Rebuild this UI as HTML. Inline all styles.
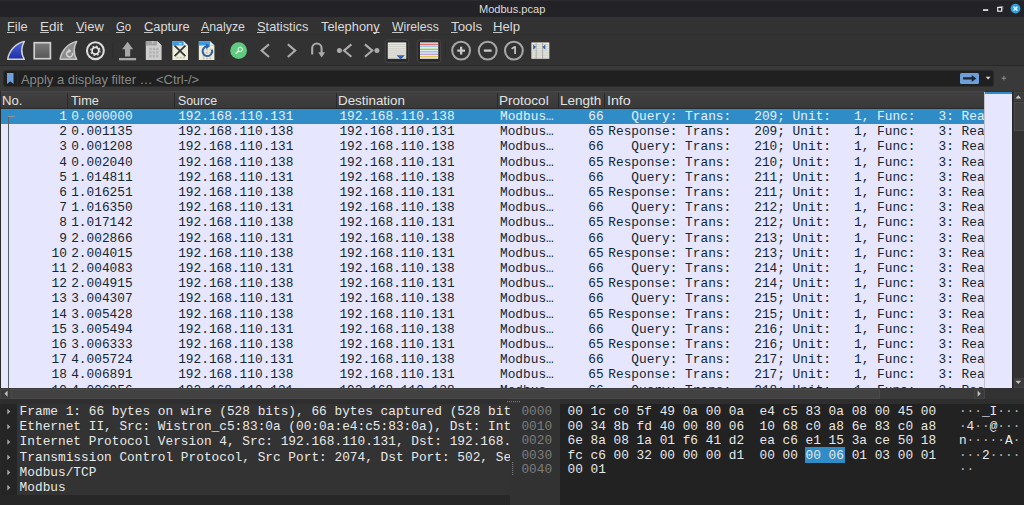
<!DOCTYPE html><html><head><meta charset="utf-8"><title>Modbus.pcap</title><style>
*{margin:0;padding:0;box-sizing:border-box}
html,body{width:1024px;height:505px;overflow:hidden;background:#323232}
body{position:relative;font-family:"Liberation Sans",sans-serif;color:#e4e4e4}
.abs{position:absolute}
.mono{font-family:"Liberation Mono",monospace;font-size:12.8px;white-space:pre}
#title{left:0;top:0;width:1024px;height:17px;background:#232327;border-top:1px solid #2b2b2f}
#titletxt{top:2.6px;transform-origin:0 0;white-space:pre;font-size:11.8px;line-height:13px;color:#dcdcdc}
.menu{top:19.5px;font-size:12.4px;line-height:14px;color:#dadada;white-space:pre;transform-origin:0 0}
.menu u{text-decoration:underline;text-decoration-skip-ink:none;text-decoration-thickness:0.9px;text-underline-offset:1.2px;text-decoration-color:#c4c4c4}
#mline{left:0;top:34.2px;width:1024px;height:1px;background:#2f2f2f}
#hline{left:1px;top:108.1px;width:984px;height:0.8px;background:#2a2a2a}
#tbline{left:0;top:65.3px;width:1024px;height:1.1px;background:#282828}
#fband{left:0;top:66.4px;width:1024px;height:25.1px;background:#393939}
#filter{left:2.8px;top:69.9px;width:990.9px;height:17.2px;background:#202020;border:1px solid #2b2b2b;border-radius:3px}
#filtertxt{top:72.8px;font-size:12.2px;line-height:14px;color:#888888;white-space:pre;transform-origin:0 0}
#hdr{left:1px;top:91.3px;width:984px;height:17.4px;background:linear-gradient(#414141,#383838);border-top:1px solid #484848}
.hsep{top:92.5px;width:1px;height:16px;background:#2a2a2a}
.ht{top:94.3px;font-size:12.2px;line-height:14px;color:#e2e2e2;white-space:pre;transform-origin:0 0}
#list{left:1px;top:108.7px;width:983px;height:279.3px;background:#e7e6ff;overflow:hidden}
.row{left:0;width:983px;height:15.2px;color:#12272e}
.row.sel{background:#308cc6;color:#e6f1f8}
.row span{position:absolute;top:0.4px;line-height:15.2px;height:15.2px}
#leftedge{left:0;top:91px;width:1px;height:297px;background:#2b2b2b}
#mini{left:984px;top:91.5px;width:28.2px;height:296.5px;background:#e7e6ff;border-left:1px solid #c2c2cc}
#minitop{left:985px;top:91.5px;width:27.2px;height:2.5px;background:#308cc6}
#vsb{left:1012.2px;top:91.5px;width:11.8px;height:296.5px;background:#323232;border-left:1px solid #262626}
.sbb{background:#3a3a3a;border:1px solid #434343}
#vsbh{left:1013.5px;top:101.5px;width:10.5px;height:29.5px;background:#3f3f3f;border:1px solid #4c4c4c;border-right:none}
#hsb{left:0;top:388px;width:985px;height:11px;background:#3a3a3a}
#hsbh{left:11px;top:388.5px;width:869px;height:10px;background:#424242;border:1px solid #4a4a4a}
#split{left:0;top:399px;width:1024px;height:5px;background:#2e2e2e}
#treebg{left:0;top:404px;width:509.7px;height:101px;background:#272727}
#treeind{left:1.3px;top:404px;width:15.7px;height:91.2px;background:#252525}
#treerows{left:17px;top:404px;width:492.7px;height:91.2px;background:#333333;overflow:hidden}
.trow{left:2.6px;color:#e8e8e8;line-height:15.2px;height:15.2px}
#offcol{left:509.7px;top:399px;width:50.6px;height:106px;background:#323232}
#hexbg{left:560.3px;top:404px;width:464px;height:101px;background:#222222}
.hrow{line-height:14.4px;height:14.4px;color:#e8e8e8}
.off{color:#7d7d7d}
.hrow i{font-style:normal;color:#b4b4b4}
</style></head><body>
<div id="title" class="abs"></div><div id="titletxt" class="abs" style="left:479.31px;transform:scaleX(0.9361)">Modbus.pcap</div>
<div class="abs menu" style="left:7.46px;transform:scaleX(1.0361)"><u>F</u>ile</div>
<div class="abs menu" style="left:39.61px;transform:scaleX(1.0875)"><u>E</u>dit</div>
<div class="abs menu" style="left:75.85px;transform:scaleX(1.0395)"><u>V</u>iew</div>
<div class="abs menu" style="left:116.35px;transform:scaleX(0.9129)"><u>G</u>o</div>
<div class="abs menu" style="left:143.58px;transform:scaleX(1.0357)"><u>C</u>apture</div>
<div class="abs menu" style="left:201.30px;transform:scaleX(0.9961)"><u>A</u>nalyze</div>
<div class="abs menu" style="left:256.73px;transform:scaleX(1.0357)"><u>S</u>tatistics</div>
<div class="abs menu" style="left:321.04px;transform:scaleX(1.0376)">Telephon<u>y</u></div>
<div class="abs menu" style="left:392.25px;transform:scaleX(0.9854)"><u>W</u>ireless</div>
<div class="abs menu" style="left:451.03px;transform:scaleX(1.0743)"><u>T</u>ools</div>
<div class="abs menu" style="left:493.24px;transform:scaleX(1.0581)"><u>H</u>elp</div>
<div id="mline" class="abs"></div><div id="tbline" class="abs"></div><div id="fband" class="abs"></div>
<div id="filter" class="abs"></div><div id="filtertxt" class="abs" style="left:21.30px;transform:scaleX(1.0604)">Apply a display filter … &lt;Ctrl-/&gt;</div>
<div id="hdr" class="abs"></div>
<div class="abs hsep" style="left:67.2px"></div>
<div class="abs hsep" style="left:174.1px"></div>
<div class="abs hsep" style="left:335.8px"></div>
<div class="abs hsep" style="left:496.7px"></div>
<div class="abs hsep" style="left:558.2px"></div>
<div class="abs hsep" style="left:603.9px"></div>
<div class="abs ht" style="left:2.12px;transform:scaleX(1.0772)">No.</div>
<div class="abs ht" style="left:70.84px;transform:scaleX(1.0474)">Time</div>
<div class="abs ht" style="left:177.64px;transform:scaleX(1.0114)">Source</div>
<div class="abs ht" style="left:338.30px;transform:scaleX(1.0970)">Destination</div>
<div class="abs ht" style="left:499.29px;transform:scaleX(1.1107)">Protocol</div>
<div class="abs ht" style="left:560.19px;transform:scaleX(1.1089)">Length</div>
<div class="abs ht" style="left:606.52px;transform:scaleX(1.1671)">Info</div>
<div id="list" class="abs">
<div class="row abs mono sel" style="top:0.0px"><span style="right:917.2px">1</span><span style="left:70.2px">0.000000</span><span style="left:177.2px">192.168.110.131</span><span style="left:338.4px">192.168.110.138</span><span style="left:499px">Modbus…</span><span style="right:380.4px">66</span><span style="left:607.3px">   Query: Trans:   209; Unit:   1, Func:   3: Read Holding Registers</span></div>
<div class="row abs mono" style="top:15.2px"><span style="right:917.2px">2</span><span style="left:70.2px">0.001135</span><span style="left:177.2px">192.168.110.138</span><span style="left:338.4px">192.168.110.131</span><span style="left:499px">Modbus…</span><span style="right:380.4px">65</span><span style="left:607.3px">Response: Trans:   209; Unit:   1, Func:   3: Read Holding Registers</span></div>
<div class="row abs mono" style="top:30.4px"><span style="right:917.2px">3</span><span style="left:70.2px">0.001208</span><span style="left:177.2px">192.168.110.131</span><span style="left:338.4px">192.168.110.138</span><span style="left:499px">Modbus…</span><span style="right:380.4px">66</span><span style="left:607.3px">   Query: Trans:   210; Unit:   1, Func:   3: Read Holding Registers</span></div>
<div class="row abs mono" style="top:45.6px"><span style="right:917.2px">4</span><span style="left:70.2px">0.002040</span><span style="left:177.2px">192.168.110.138</span><span style="left:338.4px">192.168.110.131</span><span style="left:499px">Modbus…</span><span style="right:380.4px">65</span><span style="left:607.3px">Response: Trans:   210; Unit:   1, Func:   3: Read Holding Registers</span></div>
<div class="row abs mono" style="top:60.8px"><span style="right:917.2px">5</span><span style="left:70.2px">1.014811</span><span style="left:177.2px">192.168.110.131</span><span style="left:338.4px">192.168.110.138</span><span style="left:499px">Modbus…</span><span style="right:380.4px">66</span><span style="left:607.3px">   Query: Trans:   211; Unit:   1, Func:   3: Read Holding Registers</span></div>
<div class="row abs mono" style="top:76.0px"><span style="right:917.2px">6</span><span style="left:70.2px">1.016251</span><span style="left:177.2px">192.168.110.138</span><span style="left:338.4px">192.168.110.131</span><span style="left:499px">Modbus…</span><span style="right:380.4px">65</span><span style="left:607.3px">Response: Trans:   211; Unit:   1, Func:   3: Read Holding Registers</span></div>
<div class="row abs mono" style="top:91.2px"><span style="right:917.2px">7</span><span style="left:70.2px">1.016350</span><span style="left:177.2px">192.168.110.131</span><span style="left:338.4px">192.168.110.138</span><span style="left:499px">Modbus…</span><span style="right:380.4px">66</span><span style="left:607.3px">   Query: Trans:   212; Unit:   1, Func:   3: Read Holding Registers</span></div>
<div class="row abs mono" style="top:106.4px"><span style="right:917.2px">8</span><span style="left:70.2px">1.017142</span><span style="left:177.2px">192.168.110.138</span><span style="left:338.4px">192.168.110.131</span><span style="left:499px">Modbus…</span><span style="right:380.4px">65</span><span style="left:607.3px">Response: Trans:   212; Unit:   1, Func:   3: Read Holding Registers</span></div>
<div class="row abs mono" style="top:121.6px"><span style="right:917.2px">9</span><span style="left:70.2px">2.002866</span><span style="left:177.2px">192.168.110.131</span><span style="left:338.4px">192.168.110.138</span><span style="left:499px">Modbus…</span><span style="right:380.4px">66</span><span style="left:607.3px">   Query: Trans:   213; Unit:   1, Func:   3: Read Holding Registers</span></div>
<div class="row abs mono" style="top:136.8px"><span style="right:917.2px">10</span><span style="left:70.2px">2.004015</span><span style="left:177.2px">192.168.110.138</span><span style="left:338.4px">192.168.110.131</span><span style="left:499px">Modbus…</span><span style="right:380.4px">65</span><span style="left:607.3px">Response: Trans:   213; Unit:   1, Func:   3: Read Holding Registers</span></div>
<div class="row abs mono" style="top:152.0px"><span style="right:917.2px">11</span><span style="left:70.2px">2.004083</span><span style="left:177.2px">192.168.110.131</span><span style="left:338.4px">192.168.110.138</span><span style="left:499px">Modbus…</span><span style="right:380.4px">66</span><span style="left:607.3px">   Query: Trans:   214; Unit:   1, Func:   3: Read Holding Registers</span></div>
<div class="row abs mono" style="top:167.2px"><span style="right:917.2px">12</span><span style="left:70.2px">2.004915</span><span style="left:177.2px">192.168.110.138</span><span style="left:338.4px">192.168.110.131</span><span style="left:499px">Modbus…</span><span style="right:380.4px">65</span><span style="left:607.3px">Response: Trans:   214; Unit:   1, Func:   3: Read Holding Registers</span></div>
<div class="row abs mono" style="top:182.4px"><span style="right:917.2px">13</span><span style="left:70.2px">3.004307</span><span style="left:177.2px">192.168.110.131</span><span style="left:338.4px">192.168.110.138</span><span style="left:499px">Modbus…</span><span style="right:380.4px">66</span><span style="left:607.3px">   Query: Trans:   215; Unit:   1, Func:   3: Read Holding Registers</span></div>
<div class="row abs mono" style="top:197.6px"><span style="right:917.2px">14</span><span style="left:70.2px">3.005428</span><span style="left:177.2px">192.168.110.138</span><span style="left:338.4px">192.168.110.131</span><span style="left:499px">Modbus…</span><span style="right:380.4px">65</span><span style="left:607.3px">Response: Trans:   215; Unit:   1, Func:   3: Read Holding Registers</span></div>
<div class="row abs mono" style="top:212.8px"><span style="right:917.2px">15</span><span style="left:70.2px">3.005494</span><span style="left:177.2px">192.168.110.131</span><span style="left:338.4px">192.168.110.138</span><span style="left:499px">Modbus…</span><span style="right:380.4px">66</span><span style="left:607.3px">   Query: Trans:   216; Unit:   1, Func:   3: Read Holding Registers</span></div>
<div class="row abs mono" style="top:228.0px"><span style="right:917.2px">16</span><span style="left:70.2px">3.006333</span><span style="left:177.2px">192.168.110.138</span><span style="left:338.4px">192.168.110.131</span><span style="left:499px">Modbus…</span><span style="right:380.4px">65</span><span style="left:607.3px">Response: Trans:   216; Unit:   1, Func:   3: Read Holding Registers</span></div>
<div class="row abs mono" style="top:243.2px"><span style="right:917.2px">17</span><span style="left:70.2px">4.005724</span><span style="left:177.2px">192.168.110.131</span><span style="left:338.4px">192.168.110.138</span><span style="left:499px">Modbus…</span><span style="right:380.4px">66</span><span style="left:607.3px">   Query: Trans:   217; Unit:   1, Func:   3: Read Holding Registers</span></div>
<div class="row abs mono" style="top:258.4px"><span style="right:917.2px">18</span><span style="left:70.2px">4.006891</span><span style="left:177.2px">192.168.110.138</span><span style="left:338.4px">192.168.110.131</span><span style="left:499px">Modbus…</span><span style="right:380.4px">65</span><span style="left:607.3px">Response: Trans:   217; Unit:   1, Func:   3: Read Holding Registers</span></div>
<div class="row abs mono" style="top:273.6px"><span style="right:917.2px">19</span><span style="left:70.2px">4.006956</span><span style="left:177.2px">192.168.110.131</span><span style="left:338.4px">192.168.110.138</span><span style="left:499px">Modbus…</span><span style="right:380.4px">66</span><span style="left:607.3px">   Query: Trans:   218; Unit:   1, Func:   3: Read Holding Registers</span></div>
<div class="abs" style="left:7.1px;top:7.6px;width:1px;height:280px;background:#5e6068"></div>
<div class="abs" style="left:7.1px;top:7.6px;width:7px;height:1px;background:#8a98a4"></div>
</div>
<div id="leftedge" class="abs"></div><div id="hline" class="abs"></div>
<div id="mini" class="abs"></div><div id="minitop" class="abs"></div>
<div id="vsb" class="abs"></div><div id="vsbh" class="abs"></div>
<div class="abs sbb" style="left:1013.5px;top:91.5px;width:10.5px;height:9.5px;border-right:none"></div>
<div class="abs sbb" style="left:1013.5px;top:377.5px;width:10.5px;height:10.5px;border-right:none"></div>
<div id="hsb" class="abs"></div><div id="hsbh" class="abs"></div>
<div class="abs sbb" style="left:0px;top:388.5px;width:11px;height:10.5px"></div>
<div class="abs sbb" style="left:974px;top:388.5px;width:10.5px;height:10.5px"></div>
<div id="split" class="abs"></div>
<div id="treebg" class="abs"></div><div id="treeind" class="abs"></div><div id="treerows" class="abs">
<div class="abs mono trow" style="top:0.0px">Frame 1: 66 bytes on wire (528 bits), 66 bytes captured (528 bits)</div>
<div class="abs mono trow" style="top:15.2px">Ethernet II, Src: Wistron_c5:83:0a (00:0a:e4:c5:83:0a), Dst: Intel_1c:c0:5f (00:0a:00:1c:c0:5f)</div>
<div class="abs mono trow" style="top:30.4px">Internet Protocol Version 4, Src: 192.168.110.131, Dst: 192.168.110.138</div>
<div class="abs mono trow" style="top:45.6px">Transmission Control Protocol, Src Port: 2074, Dst Port: 502, Seq: 1, Ack: 1, Len: 12</div>
<div class="abs mono trow" style="top:60.8px">Modbus/TCP</div>
<div class="abs mono trow" style="top:76.0px">Modbus</div>
</div>
<div id="offcol" class="abs"></div><div id="hexbg" class="abs"></div>
<div class="abs" style="left:805.2px;top:447.3px;width:39.8px;height:15.6px;background:#308cc6"></div>
<div class="abs mono hrow off" style="left:521.4px;top:405.4px">0000</div>
<div class="abs mono hrow" style="left:567.5px;top:405.4px">00 1c c0 5f 49 0a 00 0a  e4 c5 83 0a 08 00 45 00</div>
<div class="abs mono hrow" style="left:958.9px;top:405.4px"><i>···</i>_I<i>···</i> <i>······</i>E<i>·</i></div>
<div class="abs mono hrow off" style="left:521.4px;top:419.8px">0010</div>
<div class="abs mono hrow" style="left:567.5px;top:419.8px">00 34 8b fd 40 00 80 06  10 68 c0 a8 6e 83 c0 a8</div>
<div class="abs mono hrow" style="left:958.9px;top:419.8px"><i>·</i>4<i>··</i>@<i>···</i> <i>·</i>h<i>··</i>n<i>···</i></div>
<div class="abs mono hrow off" style="left:521.4px;top:434.2px">0020</div>
<div class="abs mono hrow" style="left:567.5px;top:434.2px">6e 8a 08 1a 01 f6 41 d2  ea c6 e1 15 3a ce 50 18</div>
<div class="abs mono hrow" style="left:958.9px;top:434.2px">n<i>·····</i>A<i>·</i> <i>····</i>:<i>·</i>P<i>·</i></div>
<div class="abs mono hrow off" style="left:521.4px;top:448.6px">0030</div>
<div class="abs mono hrow" style="left:567.5px;top:448.6px">fc c6 00 32 00 00 00 d1  00 00 00 06 01 03 00 01</div>
<div class="abs mono hrow" style="left:958.9px;top:448.6px"><i>···</i>2<i>····</i> <i>········</i></div>
<div class="abs mono hrow off" style="left:521.4px;top:463.0px">0040</div>
<div class="abs mono hrow" style="left:567.5px;top:463.0px">00 01</div>
<div class="abs mono hrow" style="left:958.9px;top:463.0px"><i>··</i></div>
<svg class="abs" style="left:0;top:0" width="1024" height="505" viewBox="0 0 1024 505">
<defs>
<linearGradient id="gb" x1="0" y1="0" x2="0" y2="1"><stop offset="0" stop-color="#4a62d8"/><stop offset="1" stop-color="#1f2fa6"/></linearGradient>
<linearGradient id="gs" x1="0" y1="0" x2="0" y2="1"><stop offset="0" stop-color="#7c7c7c"/><stop offset="1" stop-color="#565656"/></linearGradient>
</defs>
<!-- window buttons -->
<rect x="983" y="9.2" width="5.2" height="1.7" fill="#e6e6e6"/>
<rect x="997.7" y="7.4" width="4" height="3.8" fill="none" stroke="#e6e6e6" stroke-width="1.2"/>
<path d="M999.4 6.4h3.4v3.2" fill="none" stroke="#9a9a9a" stroke-width="0.8"/>
<circle cx="1015.5" cy="8.6" r="4.9" fill="#2aa3e2"/>
<path d="M1013.6 6.7l3.8 3.8M1017.4 6.7l-3.8 3.8" stroke="#fff" stroke-width="1.3" fill="none"/>
<!-- shark fin start -->
<path d="M7.7 59.3C8.7 52 15 43.2 24.3 41.5C21.2 47 21.2 54 24.3 59.3Z" fill="url(#gb)" stroke="#d2d2d2" stroke-width="1.5" stroke-linejoin="round"/>
<!-- stop -->
<rect x="34.2" y="42.7" width="16.2" height="16" fill="url(#gs)" stroke="#cecece" stroke-width="1.7"/>
<!-- restart fin -->
<path d="M60.1 59.3C61.1 52 67.4 43.2 76.7 41.5C73.6 47 73.6 54 76.7 59.3Z" fill="#8c8c8c" stroke="#c6c6c6" stroke-width="1.5" stroke-linejoin="round"/>
<path d="M72.42 52.87A3 3 0 1 1 69.08 50.95" fill="none" stroke="#d0d0d0" stroke-width="1.6"/>
<path d="M68.3 48.5l3.1 2.4l-3.1 2.3z" fill="#d6d6d6"/>
<!-- options gear -->
<circle cx="95.4" cy="50.7" r="8.4" fill="none" stroke="#dcdcdc" stroke-width="2.1"/>
<circle cx="95.4" cy="50.7" r="3.35" fill="none" stroke="#e8e8e8" stroke-width="1.7"/>
<circle cx="95.4" cy="50.7" r="4.7" fill="none" stroke="#e8e8e8" stroke-width="1.1" stroke-dasharray="1.846 1.846"/>
<!-- separators -->
<rect x="112.3" y="43" width="0.8" height="15" fill="#2b2b2b"/>
<rect x="222.5" y="43" width="0.8" height="15" fill="#2b2b2b"/>
<rect x="445" y="43" width="0.8" height="15" fill="#2b2b2b"/>
<!-- open (upload arrow) -->
<path d="M127.6 41.8l5.5 7.5h-2.9v7.1h-5.2v-7.1h-2.9z" fill="#a8a8a8"/>
<rect x="119" y="58" width="17.1" height="2.3" fill="#a8a8a8"/>
<!-- save doc (gray) -->
<path d="M145.8 41.2h11.4l4.4 4.4v14.4h-15.8z" fill="#cfcfcf"/>
<path d="M145.8 41.2h11.4l4.4 4.4h-15.8z" fill="#a2a2a2"/>
<path d="M151.5 41.2l1.2 2.6l1.2-2.6z" fill="#cfcfcf"/>
<path d="M157.2 41.2v4.4h4.4z" fill="#dadada"/>
<g fill="#b0b0b0"><rect x="149.3" y="47.8" width="2.4" height="2.3"/><rect x="152.7" y="47.8" width="2.4" height="2.3"/><rect x="156.1" y="47.8" width="2.4" height="2.3"/><rect x="149.3" y="51.3" width="2.4" height="2.3"/><rect x="152.7" y="51.3" width="2.4" height="2.3"/><rect x="156.1" y="51.3" width="2.4" height="2.3"/><rect x="149.3" y="54.9" width="2.4" height="2.3"/><rect x="152.7" y="54.9" width="2.4" height="2.3"/><rect x="156.1" y="54.9" width="2.4" height="2.3"/></g><g stroke="#c2c2c2" stroke-width="0.6" fill="none"><path d="M148.2 50.7h11.4M148.2 54.2h11.4M148.2 57.8h11.4"/></g>
<!-- close doc -->
<path d="M172.4 41.2h11.2l4.4 4.4v14.4h-15.6z" fill="#eeeed8"/>
<path d="M172.4 41.2h11.2l4.4 4.4h-15.6z" fill="#3c9ade"/>
<path d="M183.6 41.2v4.4h4.4z" fill="#dff0fa"/>
<path d="M178.5 44.3a1.8 1.8 0 0 1 3.4 0z" fill="#e6f3fb"/>
<g fill="#c6c6b6"><rect x="176.2" y="56.8" width="2.2" height="1.6"/><rect x="179.5" y="56.8" width="2.2" height="1.6"/><rect x="182.8" y="56.8" width="2.2" height="1.6"/></g>
<path d="M174.6 45.6l10.8 10.6M185.4 45.6l-10.8 10.6" stroke="#2e3338" stroke-width="1.7" fill="none"/>
<!-- reload doc -->
<path d="M198.8 41.2h11.2l4.4 4.4v14.4h-15.6z" fill="#eeeed8"/>
<path d="M198.8 41.2h11.2l4.4 4.4h-15.6z" fill="#3c9ade"/>
<path d="M210 41.2v4.4h4.4z" fill="#dff0fa"/>
<g fill="#c6c6b6"><rect x="202.6" y="48.6" width="2.2" height="1.8"/><rect x="205.9" y="48.6" width="2.2" height="1.8"/><rect x="209.2" y="48.6" width="2.2" height="1.8"/><rect x="202.6" y="51.8" width="2.2" height="1.8"/><rect x="205.9" y="51.8" width="2.2" height="1.8"/><rect x="209.2" y="51.8" width="2.2" height="1.8"/><rect x="202.6" y="55.0" width="2.2" height="1.8"/><rect x="205.9" y="55.0" width="2.2" height="1.8"/><rect x="209.2" y="55.0" width="2.2" height="1.8"/><rect x="202.6" y="57.6" width="2.2" height="1.8"/><rect x="205.9" y="57.6" width="2.2" height="1.8"/><rect x="209.2" y="57.6" width="2.2" height="1.8"/></g>
<path d="M206.6 46.5A4.8 4.8 0 1 0 211.9 49.6" fill="none" stroke="#2f5fae" stroke-width="2"/>
<path d="M205.8 43.6l4.4 2.4l-4 3.2z" fill="#2f5fae"/>
<!-- find -->
<circle cx="238.6" cy="50.6" r="8.4" fill="#5fca80"/>
<circle cx="240.2" cy="49.4" r="2.2" fill="none" stroke="#f4fff6" stroke-width="1"/>
<path d="M238.6 51l-3 2.8" stroke="#f4fff6" stroke-width="1.2" fill="none"/>
<!-- nav arrows -->
<g fill="none" stroke="#ababab" stroke-width="2.1">
<path d="M269 44.2l-7.4 6.4l7.4 6.4"/>
<path d="M287.8 44.2l7.4 6.4l-7.4 6.4"/>
<path d="M312.2 54.4v-6.2a4.7 4.7 0 0 1 9.4 0v5"/>
<path d="M351.4 44.4l-7.4 6.2l7.4 6.2"/>
<path d="M364.9 44.4l7.4 6.2l-7.4 6.2"/>
</g>
<path d="M318.2 52.2h6.9l-3.45 5.4z" fill="#ababab"/>
<circle cx="339.4" cy="50.6" r="2.5" fill="#ababab"/>
<circle cx="376.9" cy="50.6" r="2.5" fill="#ababab"/>
<!-- autoscroll button -->
<rect x="385.3" y="39.9" width="23.4" height="22.6" rx="2.5" fill="#2a2a2a" stroke="#464646" stroke-width="1"/>
<rect x="387.8" y="42.4" width="18.4" height="16.4" fill="#e9e9e2"/>
<g stroke="#bdbdb6" stroke-width="0.7"><path d="M387.8 44.6h18.4M387.8 46.7h18.4M387.8 48.8h18.4M387.8 50.9h18.4M387.8 53h18.4M387.8 55.1h18.4M387.8 57.2h18.4"/></g>
<path d="M396.6 55.2h8.2l-4.1 4.3z" fill="#2d62b2"/>
<!-- colorize button -->
<rect x="417.3" y="39.9" width="23.4" height="22.6" rx="2.5" fill="#2a2a2a" stroke="#464646" stroke-width="1"/>
<rect x="420" y="42.4" width="18.2" height="16.4" fill="#f4f4f4"/>
<rect x="420" y="43.7" width="18.2" height="1.2" fill="#e85a5a"/>
<rect x="420" y="45.6" width="18.2" height="1.6" fill="#a4c2ea"/>
<rect x="420" y="48.6" width="18.2" height="1.4" fill="#84d648"/>
<rect x="420" y="50.8" width="18.2" height="1.8" fill="#a4c2ea"/>
<rect x="420" y="53.7" width="18.2" height="1.1" fill="#b08cc4"/>
<rect x="420" y="55.8" width="18.2" height="1.6" fill="#e2c452"/>
<!-- zoom -->
<g fill="none" stroke="#a6a6a6" stroke-width="2.1">
<circle cx="461.1" cy="50.6" r="8.9"/><circle cx="487.7" cy="50.6" r="8.9"/><circle cx="513.9" cy="50.6" r="8.9"/>
</g>
<path d="M457.3 50.6h7.7M461.15 46.8v7.6" stroke="#cacaca" stroke-width="2.3" fill="none"/>
<path d="M483.9 50.6h7.7" stroke="#cacaca" stroke-width="2.3" fill="none"/>
<path d="M511.6 48.9l2.6-1.8h0.9v6.9" stroke="#c8c8c8" stroke-width="1.7" fill="none"/>
<!-- resize columns -->
<rect x="531.4" y="42.4" width="17.9" height="16.4" fill="#e9e9e2"/>
<g stroke="#c2c2bb" stroke-width="0.7"><path d="M531.4 44.6h17.9M531.4 46.7h17.9M531.4 48.8h17.9M531.4 50.9h17.9M531.4 53h17.9M531.4 55.1h17.9M531.4 57.2h17.9"/></g>
<path d="M536.2 42v17.2M542.6 42v17.2" stroke="#9c9c9c" stroke-width="0.8"/>
<path d="M533.2 44.5l2.8 2.6l-2.8 2.6z" fill="#2d62b2"/>
<path d="M545.3 44.5l-2.8 2.6l2.8 2.6z" fill="#2d62b2"/>
<!-- filter bookmark -->
<path d="M7 73.1h6.5v10.8l-3.25-2.6l-3.25 2.6z" fill="#6fa1dd"/>
<rect x="17.2" y="71" width="0.8" height="16" fill="#2e2e2e"/>
<!-- filter apply button -->
<rect x="960" y="72.9" width="19" height="11" rx="1.5" fill="#6f9fd8"/>
<path d="M963.1 77.2h8.6v-2.3l4.6 3.5l-4.6 3.5v-2.3h-8.6z" fill="#1c2630"/>
<path d="M985.6 76.7h5l-2.5 2.8z" fill="#d8d8d8"/>
<path d="M1001.6 78.2h4.6M1003.9 75.9v4.6" stroke="#8e8e8e" stroke-width="1" fill="none"/>
<!-- scrollbar arrows -->
<path d="M1015.4 98.4l2.9-3.2l2.9 3.2z" fill="#c6c6c6"/>
<path d="M1015.4 380.8l2.9 3.2l2.9-3.2z" fill="#bdbdbd"/>
<path d="M7.6 390.6l-3.2 3.1l3.2 3.1z" fill="#bdbdbd"/>
<path d="M977.6 390.6l3.2 3.1l-3.2 3.1z" fill="#bdbdbd"/>
<!-- tree expanders -->
<g fill="#a8a8a8">
<path d="M7.3 408.8l3 2.8l-3 2.8z"/><path d="M7.3 424l3 2.8l-3 2.8z"/><path d="M7.3 439.2l3 2.8l-3 2.8z"/><path d="M7.3 454.4l3 2.8l-3 2.8z"/><path d="M7.3 469.6l3 2.8l-3 2.8z"/><path d="M7.3 484.8l3 2.8l-3 2.8z"/>
</g>
<!-- splitter dots -->
<g fill="#8c8c8c">
<rect x="507" y="401.2" width="1" height="1"/><rect x="509" y="401.2" width="1" height="1"/><rect x="511" y="401.2" width="1" height="1"/><rect x="513" y="401.2" width="1" height="1"/><rect x="515" y="401.2" width="1" height="1"/><rect x="517" y="401.2" width="1" height="1"/><rect x="519" y="401.2" width="1" height="1"/>
<rect x="512.2" y="462" width="1" height="1"/><rect x="512.2" y="464" width="1" height="1"/><rect x="512.2" y="466" width="1" height="1"/><rect x="512.2" y="468" width="1" height="1"/><rect x="512.2" y="470" width="1" height="1"/><rect x="512.2" y="472" width="1" height="1"/><rect x="512.2" y="474" width="1" height="1"/>
</g>
</svg>

</body></html>
